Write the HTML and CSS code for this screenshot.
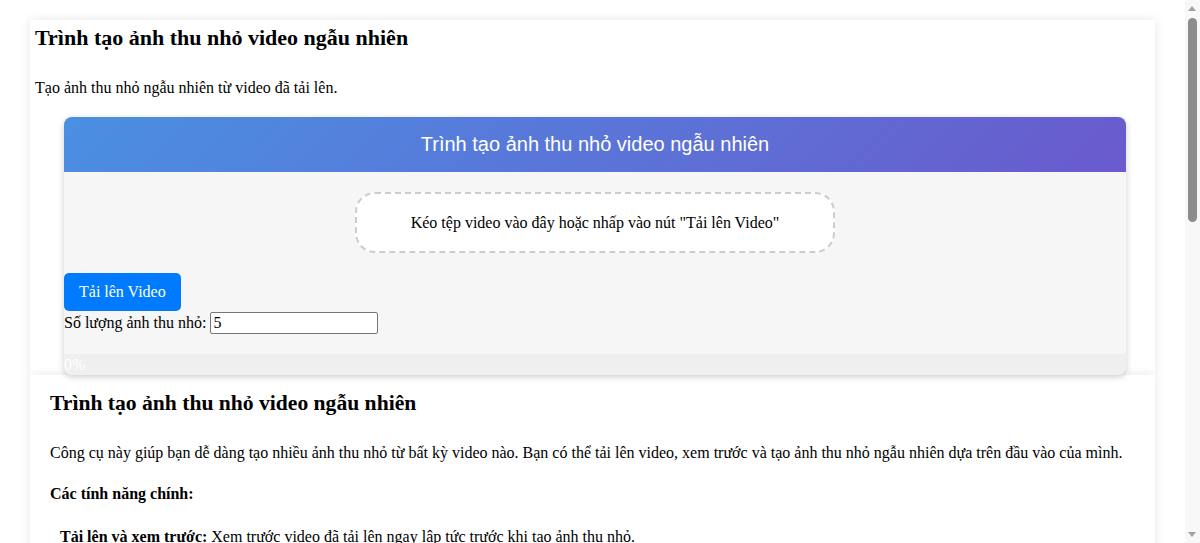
FILE: index.html
```html
<!DOCTYPE html>
<html lang="vi">
<head>
  <meta charset="UTF-8">
  <title>Trình tạo ảnh thu nhỏ video ngẫu nhiên</title>
  <link rel="stylesheet" href="styles.css">
</head>
<body>

  <div class="tool">
    <h2 class="tool-title">Trình tạo ảnh thu nhỏ video ngẫu nhiên</h2>
    <p class="tool-desc">Tạo ảnh thu nhỏ ngẫu nhiên từ video đã tải lên.</p>

    <div class="card">
      <div class="card-header">Trình tạo ảnh thu nhỏ video ngẫu nhiên</div>
      <div class="card-body">
        <div class="drop-zone">Kéo tệp video vào đây hoặc nhấp vào nút "Tải lên Video"</div>
        <button class="upload-btn">Tải lên Video</button>
        <div class="count-row">
          <label for="thumbCount">Số lượng ảnh thu nhỏ:</label>
          <input type="text" id="thumbCount" value="5">
        </div>
        <div class="progress">
          <div class="progress-fill">0%</div>
        </div>
      </div>
    </div>
  </div>

  <div class="about">
    <h2>Trình tạo ảnh thu nhỏ video ngẫu nhiên</h2>
    <p>Công cụ này giúp bạn dễ dàng tạo nhiều ảnh thu nhỏ từ bất kỳ video nào. Bạn có thể tải lên video, xem trước và tạo ảnh thu nhỏ ngẫu nhiên dựa trên đầu vào của mình.</p>
    <p><strong>Các tính năng chính:</strong></p>
    <ul>
      <li><strong>Tải lên và xem trước:</strong> Xem trước video đã tải lên ngay lập tức trước khi tạo ảnh thu nhỏ.</li>
      <li><strong>Số lượng tùy chỉnh:</strong> Chọn số lượng ảnh thu nhỏ bạn muốn tạo từ video.</li>
      <li><strong>Chọn ngẫu nhiên:</strong> Ảnh thu nhỏ được lấy tại các thời điểm ngẫu nhiên trong video.</li>
      <li><strong>Theo dõi tiến trình:</strong> Thanh tiến trình cho biết quá trình tạo ảnh đã hoàn thành bao nhiêu.</li>
      <li><strong>Tải xuống dễ dàng:</strong> Nhấp vào từng ảnh thu nhỏ để tải xuống máy của bạn.</li>
    </ul>
    <p><strong>Cách sử dụng:</strong></p>
    <ol>
      <li>Kéo tệp video vào khu vực tải lên hoặc nhấp vào nút "Tải lên Video".</li>
      <li>Nhập số lượng ảnh thu nhỏ bạn muốn tạo.</li>
      <li>Chờ thanh tiến trình đạt 100%.</li>
      <li>Nhấp vào ảnh thu nhỏ để tải xuống.</li>
    </ol>
    <p>Mọi xử lý đều diễn ra ngay trong trình duyệt của bạn, video không được gửi lên máy chủ nào.</p>
    <p>Công cụ hỗ trợ các định dạng video phổ biến như MP4, WebM và Ogg.</p>
    <p>Hãy thử ngay để tìm ra khung hình đẹp nhất cho video của bạn!</p>
  </div>

  <!-- window scrollbar, drawn since the headless browser hides it -->
  <div class="scrollbar">
    <span class="arrow-up"></span>
    <span class="thumb"></span>
    <span class="arrow-down"></span>
  </div>

</body>
</html>
```

FILE: styles.css
```css
body {
  font-family: "Liberation Serif", "Times New Roman", serif;
  font-size: 16px;
  color: #000;
  background-color: #fff;
  margin: 0 15px 0 0;
}

.tool,
.about {
  margin: 0 30px;
  background-color: #fff;
  box-shadow: 0 0 10px rgba(0,0,0,0.1);
}

.tool {
  margin-top: 20px;
  padding: 5px 5px 0;
}

.tool-title {
  font-size: 22px;
  margin: 0 0 28px;
}

.tool-desc {
  margin: 0 0 20px;
}

.card {
  margin: 0 24px 0 29px;
  background-color: #f6f6f6;
  border-radius: 8px;
  overflow: hidden;
  box-shadow: 0 2px 6px rgba(0,0,0,0.2);
  position: relative;
  z-index: 1;
}

.card-header {
  background: linear-gradient(135deg, #4a90e2, #6a5acd);
  color: white;
  font-family: "Liberation Sans", Arial, sans-serif;
  font-size: 20px;
  text-align: center;
  padding: 16px;
}

.drop-zone {
  width: 476px;
  margin: 20px auto 20px;
  padding: 20px 0;
  line-height: 17px;
  background-color: #fff;
  border: 2px dashed #ccc;
  border-radius: 20px;
  text-align: center;
}

.upload-btn {
  display: block;
  padding: 10px 15px;
  font-family: inherit;
  font-size: 16px;
  background-color: #007bff;
  color: white;
  border: none;
  border-radius: 5px;
}

.count-row {
  margin-top: 1px;
  height: 22px;
  display: flex;
  align-items: center;
  gap: 4px;
}

.count-row input {
  width: 168px;
  height: 22px;
  box-sizing: border-box;
  padding: 1px 2px;
  font-family: inherit;
  font-size: 16px;
  border: 1px solid #767676;
  border-radius: 2px;
}

.progress {
  margin-top: 20px;
  height: 21px;
  background-color: #efefef;
}

.progress-fill {
  width: 0;
  height: 100%;
  background-color: #4caf50;
  color: white;
  white-space: nowrap;
  line-height: 21px;
}

.about {
  padding: 11px 20px 20px;
  line-height: 1.6;
}

.about h2 {
  font-size: 21.6px;
  margin: 0 0 19px;
}

.about p {
  margin: 16px 0;
}

.about ul {
  list-style: none;
  padding-left: 10px;
  margin: 17px 0 16px;
}

.scrollbar {
  position: fixed;
  top: 0;
  right: 0;
  width: 15px;
  height: 100%;
  background-color: #f8f8f8;
}

.thumb {
  position: absolute;
  left: 3px;
  top: 18px;
  width: 9px;
  height: 204px;
  border-radius: 5px;
  background-color: #8c8c8c;
}

.arrow-up,
.arrow-down {
  position: absolute;
  left: 3px;
  width: 0;
  height: 0;
  border-left: 4.5px solid transparent;
  border-right: 4.5px solid transparent;
}

.arrow-up {
  top: 6px;
  border-bottom: 5px solid #a3a3a3;
}

.arrow-down {
  bottom: 6px;
  border-top: 5px solid #a3a3a3;
}
```
